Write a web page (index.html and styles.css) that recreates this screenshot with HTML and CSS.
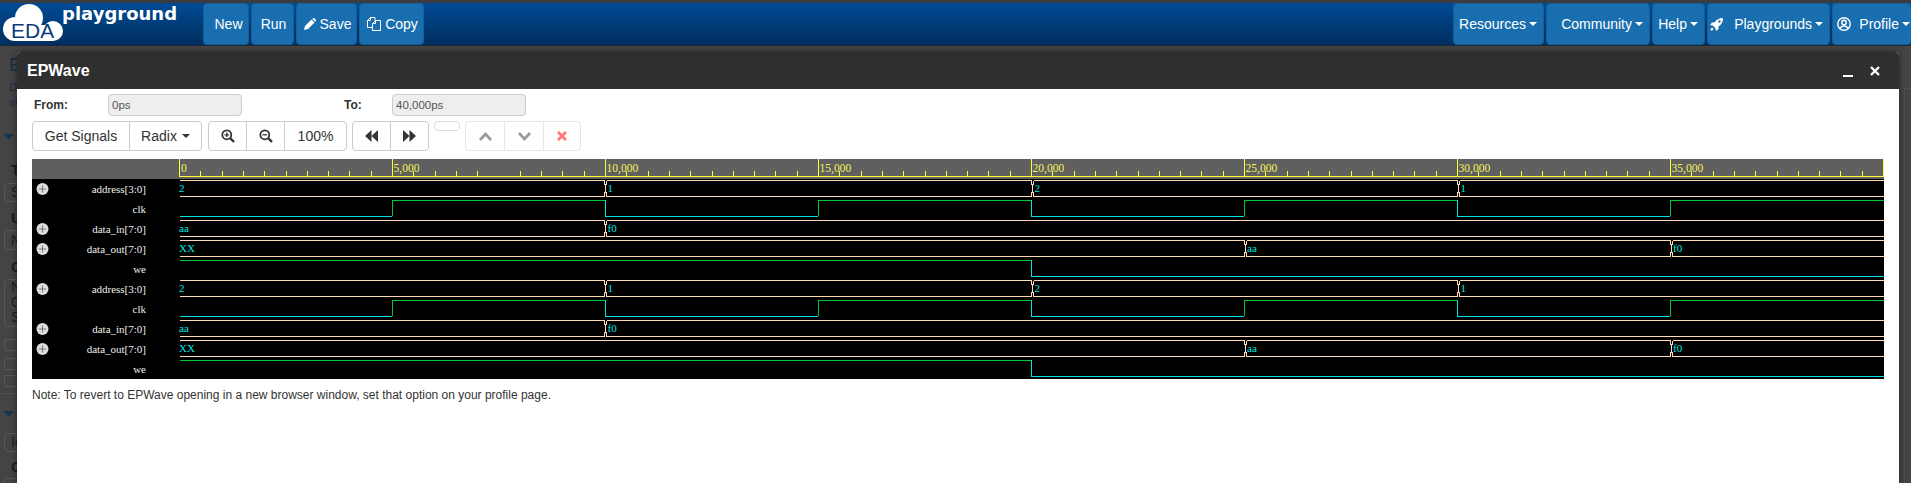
FILE: index.html
```html
<!DOCTYPE html>
<html lang="en">
<head>
  <meta charset="UTF-8">
  <title>EDA Playground - EPWave</title>
  <link rel="stylesheet" href="styles.css">
</head>
<body>

  <nav class="navbar">
    <a class="logo">
      <svg class="logo-cloud" width="60" height="37" viewBox="3 4 60 37">
        <circle cx="15" cy="29" r="12"/>
        <circle cx="29" cy="18" r="14"/>
        <circle cx="53" cy="31" r="10"/>
        <rect x="15" y="25" width="38" height="16"/>
        <text x="11" y="38" class="logo-eda">EDA</text>
      </svg>
      <span class="logo-name">playground</span>
    </a>
    <button class="nav-btn btn-new">New</button>
    <button class="nav-btn btn-run">Run</button>
    <button class="nav-btn btn-save">
      <svg width="12" height="12" viewBox="0 0 12 12"><path d="M0 12l1-4 6.500-6.500 3 3L4 11zM8.300.9l.8-.7c.4-.3.9-.3 1.300 0l1.400 1.400c.3.4.3.9 0 1.300l-.7.8z" fill="#fff"/></svg>
      Save
    </button>
    <button class="nav-btn btn-copy">
      <svg width="14" height="14" viewBox="0 0 14 14" fill="none" stroke="#fff"><path d="M5.500 10.500h-5v-7l3-3h4.500v3M3.500.5v3h-3M5.500 13.500v-7l3-3h5v10zM8.500 3.500v3h-3"/></svg>
      Copy
    </button>

    <div class="nav-right">
      <button class="nav-btn btn-resources">Resources <i class="caret"></i></button>
      <button class="nav-btn btn-community">Community <i class="caret"></i></button>
      <button class="nav-btn btn-help">Help <i class="caret"></i></button>
      <button class="nav-btn btn-playgrounds">
        <svg width="13" height="13" viewBox="0 0 13 13" fill="#fff"><path fill-rule="evenodd" d="M13 0C9 0 6.500 1.500 4.500 4.500H2L0 7l2.800.6 2.600 2.600L6 13l2.500-2V8.500C11.500 6.500 13 4 13 0zM9.500 2.300a1.200 1.200 0 1 1 0 2.400 1.200 1.200 0 0 1 0-2.400z"/><path d="M2 9.500c-1 .5-1.500 2-1.500 3 1 0 2.500-.5 3-1.500z"/></svg>
        <span class="nav-label">Playgrounds</span> <i class="caret"></i>
      </button>
      <button class="nav-btn btn-profile">
        <svg width="14" height="14" viewBox="0 0 14 14" fill="none" stroke="#fff" stroke-width="1.400"><circle cx="7" cy="7" r="6.200"/><circle cx="7" cy="5.500" r="2.200"/><path d="M3 11.500c.8-1.800 2.200-2.500 4-2.500s3.200.7 4 2.500"/></svg>
        <span class="nav-label">Profile</span> <i class="caret"></i>
      </button>
    </div>
  </nav>

  <div class="page">
    <!-- dimmed page behind the dialog -->
    <aside class="dim-col">
      <div class="dim-title">B</div>
      <div class="dim-text dim-do">Do</div>
      <div class="dim-text dim-at">at</div>
      <i class="dim-arrow dim-arrow-a"></i>
      <div class="dim-bold dim-t">T</div>
      <div class="dim-box dim-box-s">S</div>
      <div class="dim-bold dim-u">U</div>
      <div class="dim-box dim-box-n">N</div>
      <div class="dim-bold dim-c">C</div>
      <div class="dim-box dim-area">N<br>O<br>S</div>
      <i class="dim-check dim-check-a"></i>
      <i class="dim-check dim-check-b"></i>
      <i class="dim-check dim-check-c"></i>
      <hr class="dim-line">
      <i class="dim-arrow dim-arrow-b"></i>
      <div class="dim-box dim-box-io">Io</div>
      <div class="dim-bold dim-c2">C</div>
      <div class="dim-box dim-box-end"></div>
    </aside>
    <div class="dim-right"></div>

    <section class="modal">
      <header class="modal-head">
        <span class="modal-title">EPWave</span>
        <div class="modal-controls">
          <svg width="10" height="12" viewBox="0 0 10 12"><rect y="10" width="10" height="2" fill="#fff"/></svg>
          <svg width="10" height="10" viewBox="0 0 10 10"><path d="M1 1l8 8M9 1l-8 8" stroke="#fff" stroke-width="2.400"/></svg>
        </div>
      </header>

      <div class="modal-body">
        <div class="range-row">
          <label class="range-label">From:</label>
          <div class="range-input">0ps</div>
          <label class="range-label range-label-to">To:</label>
          <div class="range-input">40,000ps</div>
        </div>

        <div class="toolbar">
          <div class="btn-group group-main">
            <button class="tool-btn tool-signals">Get Signals</button>
            <button class="tool-btn tool-radix">Radix <i class="caret caret-dark"></i></button>
          </div>
          <div class="btn-group group-zoom">
            <button class="tool-btn tool-icon">
              <svg width="14" height="14" viewBox="0 0 14 14" fill="none" stroke="#333"><circle cx="5.800" cy="5.800" r="4.500" stroke-width="1.800"/><path d="M9.200 9.200l3.800 3.800" stroke-width="2.400"/><path d="M3.500 5.800h4.600M5.800 3.500v4.600" stroke-width="1.300"/></svg>
            </button>
            <button class="tool-btn tool-icon">
              <svg width="14" height="14" viewBox="0 0 14 14" fill="none" stroke="#333"><circle cx="5.800" cy="5.800" r="4.500" stroke-width="1.800"/><path d="M9.200 9.200l3.800 3.800" stroke-width="2.400"/><path d="M3.500 5.800h4.600" stroke-width="1.300"/></svg>
            </button>
            <button class="tool-btn tool-percent">100%</button>
          </div>
          <div class="btn-group group-seek">
            <button class="tool-btn tool-seek">
              <svg width="13" height="12" viewBox="0 0 13 12" fill="#333"><path d="M6.500 0v12L0 6zM13 0v12L6.500 6z"/></svg>
            </button>
            <button class="tool-btn tool-seek">
              <svg width="13" height="12" viewBox="0 0 13 12" fill="#333"><path d="M0 0v12l6.500-6zM6.500 0v12L13 6z"/></svg>
            </button>
          </div>
          <button class="tool-empty"></button>
          <div class="btn-group group-off">
            <button class="tool-btn tool-off">
              <svg width="13" height="9" viewBox="0 0 13 9" fill="none" stroke="#999" stroke-width="2.600"><path d="M1 8l5.500-6L12 8"/></svg>
            </button>
            <button class="tool-btn tool-off">
              <svg width="13" height="9" viewBox="0 0 13 9" fill="none" stroke="#999" stroke-width="2.600"><path d="M1 1l5.500 6L12 1"/></svg>
            </button>
            <button class="tool-btn tool-off tool-off-end">
              <svg width="10" height="10" viewBox="0 0 10 10" fill="none" stroke="#f77" stroke-width="2.800"><path d="M1 1l8 8M9 1l-8 8"/></svg>
            </button>
          </div>
        </div>

        <svg class="wave" width="1852" height="220" viewBox="32 159 1852 220">
          <defs>
            <path id="mark" d="M.5 0v4h1v8h-1v4M2.500 0v4h-1v8h1v4"/>
          </defs>
          <rect x="32" y="159" width="1852" height="20" fill="#5f5f5f"/>
          <rect x="32" y="179" width="1852" height="200" fill="#000"/>

          <g class="ruler">
            <path d="M179 176.500H1884"/>
            <path d="M179 173.500H1884" stroke-width="5" stroke-dasharray="1 20.300"/>
            <path d="M179.500 159v18M392.500 159v18M605.500 159v18M818.500 159v18M1031.500 159v18M1244.500 159v18M1457.500 159v18M1670.500 159v18M1883.500 159v18"/>
          </g>
          <g class="ruler-text">
            <text x="181" y="172">0</text>
            <text x="393.500" y="172">5,000</text>
            <text x="606.500" y="172">10,000</text>
            <text x="819.500" y="172">15,000</text>
            <text x="1032.500" y="172">20,000</text>
            <text x="1245.500" y="172">25,000</text>
            <text x="1458.500" y="172">30,000</text>
            <text x="1671.500" y="172">35,000</text>
          </g>

          <!-- traces for the five signals, drawn twice -->
          <g id="traces" class="traces">
            <g class="bus">
              <path d="M180 180.500H604.500M606.500 180.500H1031.500M1033.500 180.500H1457.500M1459.500 180.500H1884M180 196.500H604.500M606.500 196.500H1031.500M1033.500 196.500H1457.500M1459.500 196.500H1884"/>
              <use href="#mark" x="604" y="180.500"/>
              <use href="#mark" x="1031" y="180.500"/>
              <use href="#mark" x="1457" y="180.500"/>
              <path d="M180 220.500H604.500M606.500 220.500H1884M180 236.500H604.500M606.500 236.500H1884"/>
              <use href="#mark" x="604" y="220.500"/>
              <path d="M180 240.500H1244.500M1246.500 240.500H1670.500M1672.500 240.500H1884M180 256.500H1244.500M1246.500 256.500H1670.500M1672.500 256.500H1884"/>
              <use href="#mark" x="1244" y="240.500"/>
              <use href="#mark" x="1670" y="240.500"/>
            </g>
            <path class="high" d="M392.500 216V200.500H605M818.500 216V200.500H1031M1244.500 216V200.500H1457M1670.500 216V200.500H1884M180 260.500H1031"/>
            <path class="low" d="M180 216.500H392M605.500 200V216.500H818M1031.500 200V216.500H1244M1457.500 200V216.500H1670M1031.500 260V276.500H1884"/>
          </g>
          <use href="#traces" y="100"/>

          <g class="sig-name">
            <text x="146" y="193">address[3:0]</text>
            <text x="146" y="213">clk</text>
            <text x="146" y="233">data_in[7:0]</text>
            <text x="146" y="253">data_out[7:0]</text>
            <text x="146" y="273">we</text>
            <text x="146" y="293">address[3:0]</text>
            <text x="146" y="313">clk</text>
            <text x="146" y="333">data_in[7:0]</text>
            <text x="146" y="353">data_out[7:0]</text>
            <text x="146" y="373">we</text>
          </g>

          <g class="sig-value">
            <text x="179" y="192">2</text>
            <text x="607.500" y="192">1</text>
            <text x="1034.500" y="192">2</text>
            <text x="1460.500" y="192">1</text>
            <text x="179" y="232">aa</text>
            <text x="607.500" y="232">f0</text>
            <text x="179" y="252">XX</text>
            <text x="1247" y="252">aa</text>
            <text x="1673" y="252">f0</text>
            <text x="179" y="292">2</text>
            <text x="607.500" y="292">1</text>
            <text x="1034.500" y="292">2</text>
            <text x="1460.500" y="292">1</text>
            <text x="179" y="332">aa</text>
            <text x="607.500" y="332">f0</text>
            <text x="179" y="352">XX</text>
            <text x="1247" y="352">aa</text>
            <text x="1673" y="352">f0</text>
          </g>

          <g class="expand">
            <circle cx="42.500" cy="189" r="6"/><path d="M39 189h7M42.500 185.500v7"/>
            <circle cx="42.500" cy="229" r="6"/><path d="M39 229h7M42.500 225.500v7"/>
            <circle cx="42.500" cy="249" r="6"/><path d="M39 249h7M42.500 245.500v7"/>
            <circle cx="42.500" cy="289" r="6"/><path d="M39 289h7M42.500 285.500v7"/>
            <circle cx="42.500" cy="329" r="6"/><path d="M39 329h7M42.500 325.500v7"/>
            <circle cx="42.500" cy="349" r="6"/><path d="M39 349h7M42.500 345.500v7"/>
          </g>
        </svg>

        <p class="note">Note: To revert to EPWave opening in a new browser window, set that option on your profile page.</p>
      </div>
    </section>
  </div>

</body>
</html>
```

FILE: styles.css
```css
* {
  box-sizing: border-box;
}

html, body {
  height: 100%;
}

body {
  margin: 0;
  overflow: hidden;
  display: flex;
  flex-direction: column;
  background-color: #444;
  font-family: "Liberation Sans", Arial, sans-serif;
  font-size: 14px;
}

button {
  font-family: inherit;
  cursor: pointer;
}

.caret {
  display: inline-block;
  width: 0;
  height: 0;
  border-top: 4px solid #fff;
  border-left: 4px solid transparent;
  border-right: 4px solid transparent;
}

.caret-dark {
  border-top-color: #333;
}

/* navbar */
.navbar {
  flex: none;
  display: flex;
  height: 46px;
  padding: 3px 0 1px;
  gap: 2px;
  background: linear-gradient(#3b3b40 3px, #004b96 3px, #012e5e 45px, #1c2733 45px);
}

.logo {
  display: flex;
  align-items: flex-start;
  width: 201px;
  padding: 1px 0 0 3px;
}

.logo-cloud {
  flex: none;
  fill: #fff;
}

.logo-eda {
  fill: #0c3b78;
  font-size: 21px;
}

.logo-name {
  margin-left: -1px;
  color: #fff;
  font-family: "DejaVu Sans", sans-serif;
  font-size: 18px;
  font-weight: bold;
  line-height: 20px;
}

.nav-btn {
  display: flex;
  align-items: center;
  justify-content: center;
  gap: 4px;
  height: 42px;
  padding: 0;
  border: 1px solid #12609c;
  border-radius: 4px;
  background-color: #186eae;
  color: #fff;
  font-size: 14px;
}

.btn-new { width: 46px; padding-left: 5px; }
.btn-run { width: 43px; padding-left: 2px; }
.btn-save { width: 61px; padding-left: 2px; }
.btn-copy { width: 65px; padding-left: 2px; }

.nav-right {
  display: flex;
  gap: 2px;
  margin-left: auto;
}

.nav-right .nav-btn {
  justify-content: flex-end;
  gap: 3px;
  padding-right: 6px;
}

.btn-resources { width: 91px; }
.btn-community { width: 104px; }
.btn-help { width: 53px; }
.btn-playgrounds { width: 123px; }
.nav-right .btn-profile { width: 79px; padding-right: 1px; border-right: 0; }

.nav-label {
  margin-left: 5px;
}

.btn-playgrounds .nav-label {
  margin-left: 8px;
}

/* dimmed page */
.page {
  position: relative;
  flex: 1;
  display: flex;
  justify-content: space-between;
  overflow: hidden;
}

.dim-col {
  width: 40px;
  padding-left: 4px;
  color: #1d1d1d;
}

.dim-right {
  width: 7px;
  margin-top: 42px;
  border-left: 1px solid #505050;
  border-top: 1px solid #505050;
}

.dim-title {
  height: 18px;
  margin: 10px 0 0 5px;
  color: #1b2b47;
  font-size: 18px;
  line-height: 18px;
}

.dim-text {
  height: 14px;
  margin-left: 5px;
  color: #1b2b47;
  font-size: 11px;
  line-height: 14px;
}

.dim-do { margin-top: 6px; }
.dim-at { margin-top: 1px; }

.dim-arrow {
  display: block;
  width: 0;
  height: 0;
  border-top: 6px solid #17344f;
  border-left: 5px solid transparent;
  border-right: 5px solid transparent;
}

.dim-arrow-a { margin-top: 25px; }
.dim-arrow-b { margin-top: 17px; }

.dim-bold {
  height: 16px;
  margin-left: 7px;
  font-size: 15px;
  font-weight: bold;
  line-height: 16px;
}

.dim-t { margin-top: 22px; }
.dim-u { margin-top: 8px; }
.dim-c { margin-top: 9px; }
.dim-c2 { margin-top: 7px; }

.dim-box {
  width: 40px;
  padding-left: 6px;
  border: 1px solid #585858;
  border-radius: 4px;
  font-size: 14px;
}

.dim-box-s { height: 19px; margin-top: 5px; line-height: 17px; }
.dim-box-n { height: 20px; margin-top: 4px; line-height: 18px; }
.dim-area { height: 48px; margin-top: 4px; line-height: 15px; }
.dim-box-io { height: 19px; margin-top: 16px; line-height: 17px; }
.dim-box-end { height: 20px; margin-top: 3px; }

.dim-check {
  display: block;
  width: 14px;
  height: 12px;
  border: 1px solid #585858;
  border-radius: 2px;
}

.dim-check-a { margin-top: 12px; }
.dim-check-b { margin-top: 7px; }
.dim-check-c { margin-top: 5px; }

.dim-line {
  width: 40px;
  margin: 6px 0 0 -4px;
  border: 0;
  border-top: 1px solid #505050;
}

/* dialog */
.modal {
  position: absolute;
  top: 6px;
  left: 17px;
  right: 12px;
  bottom: 0;
  display: flex;
  flex-direction: column;
  border-radius: 4px 4px 0 0;
  background-color: #fff;
  box-shadow: 0 0 6px rgba(0, 0, 0, .5);
}

.modal-head {
  flex: none;
  display: flex;
  align-items: center;
  justify-content: space-between;
  height: 37px;
  padding: 0 19px 0 10px;
  border-radius: 4px 4px 0 0;
  background-color: #2f2f2f;
}

.modal-title {
  color: #fff;
  font-size: 16px;
  font-weight: bold;
}

.modal-controls {
  display: flex;
  align-items: center;
  gap: 17px;
}

.modal-body {
  flex: 1;
  padding: 5px 15px 0;
}

.range-row {
  display: flex;
  align-items: center;
  height: 22px;
}

.range-label {
  width: 76px;
  padding-left: 2px;
  color: #333;
  font-size: 12px;
  font-weight: bold;
}

.range-label-to {
  width: 48px;
  margin-left: 102px;
  padding-left: 0;
}

.range-input {
  width: 134px;
  height: 22px;
  padding-left: 3px;
  border: 1px solid #ccc;
  border-radius: 4px;
  background-color: #eee;
  color: #555;
  font-size: 11.500px;
  line-height: 20px;
}

.toolbar {
  display: flex;
  align-items: flex-start;
  height: 30px;
  margin-top: 5px;
}

.btn-group {
  display: flex;
  height: 30px;
}

.group-zoom { margin-left: 6px; }
.group-seek { margin-left: 5px; }
.group-off { margin-left: 5px; }

.tool-btn {
  display: flex;
  align-items: center;
  justify-content: center;
  gap: 5px;
  height: 30px;
  margin-left: -1px;
  padding: 0;
  border: 1px solid #ccc;
  background-color: #fff;
  color: #333;
  font-size: 14px;
}

.tool-btn:first-child {
  margin-left: 0;
  border-radius: 4px 0 0 4px;
}

.tool-btn:last-child {
  border-radius: 0 4px 4px 0;
}

.tool-signals { width: 98px; }
.tool-radix { width: 73px; }
.tool-icon { width: 39px; }
.tool-percent { width: 63px; }
.tool-seek { width: 39px; }
.tool-off { width: 40px; border-color: #e6e6e6; }
.tool-off-end { width: 38px; }

.tool-empty {
  width: 26px;
  height: 10px;
  margin-left: 5px;
  padding: 0;
  border: 1px solid #ddd;
  border-radius: 4px;
  background-color: #fff;
}

/* waveform */
.wave {
  display: block;
  margin-top: 8px;
  shape-rendering: crispEdges;
  font-family: "Liberation Serif", "Times New Roman", serif;
  font-size: 11px;
}

.ruler {
  fill: none;
  stroke: #ffff33;
}

.ruler-text {
  fill: #f4f45a;
  font-size: 11.500px;
}

.traces {
  fill: none;
}

.bus {
  fill: none;
  stroke: #fddab8;
}

.high {
  stroke: #00c837;
}

.low {
  stroke: #00e6e6;
}

.sig-name {
  fill: #eee;
  text-anchor: end;
}

.sig-value {
  fill: #00e5e5;
}

.expand {
  fill: #ddd;
  stroke: #777;
  shape-rendering: auto;
}

.expand circle {
  stroke: none;
}

.note {
  margin: 9px 0 0;
  color: #333;
  font-size: 12px;
  line-height: 14px;
}
```
